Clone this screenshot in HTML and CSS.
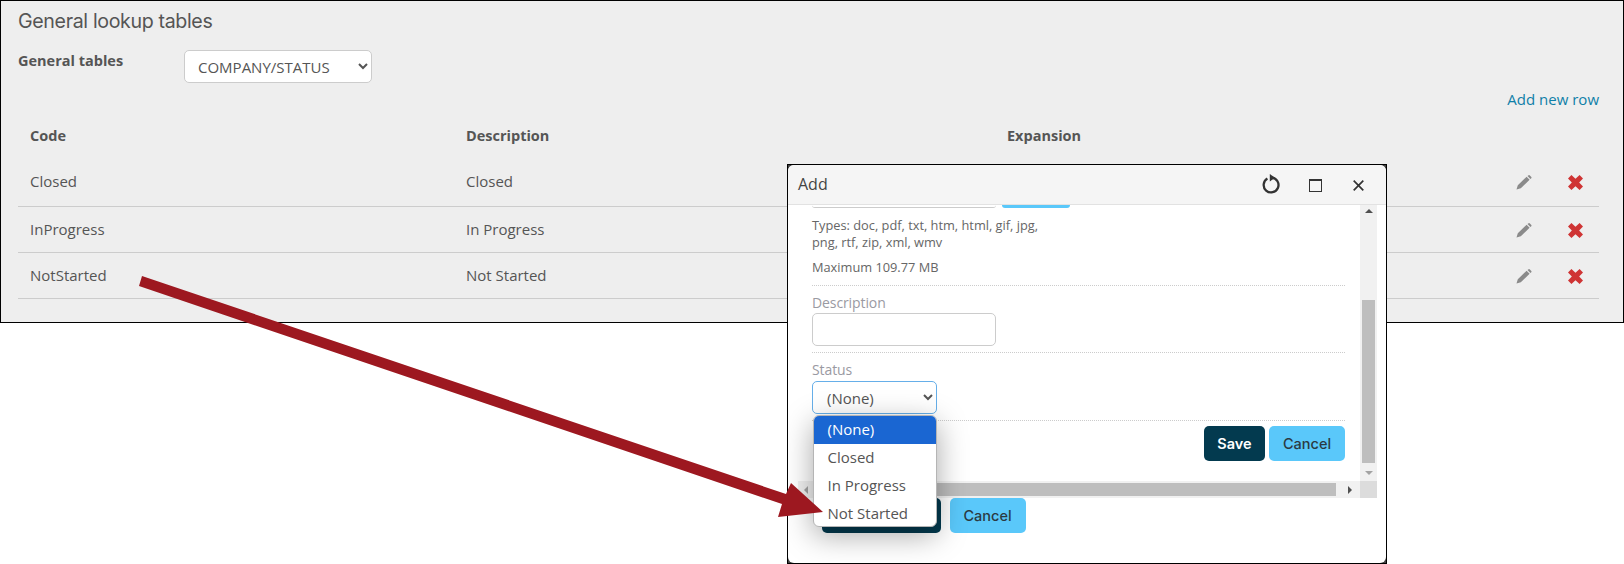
FILE: index.html
```html
<!DOCTYPE html>
<html lang="en">
<head>
<meta charset="utf-8">
<title>General lookup tables</title>
<link rel="stylesheet" href="styles.css">
</head>
<body>
<div class="canvas">
  <section class="panel">
    <h1 class="title">General lookup tables</h1>
    <div class="filter">
      <label class="filter-label">General tables</label>
      <select class="filter-select"><option>COMPANY/STATUS</option></select>
    </div>
    <div class="add-row"><a class="add-link">Add new row</a></div>
    <div class="grid-head">
      <div class="col-code">Code</div>
      <div class="col-desc">Description</div>
      <div class="col-exp">Expansion</div>
    </div>
    <div class="grid-row">
      <div class="col-code">Closed</div>
      <div class="col-desc">Closed</div>
      <div class="col-exp"></div>
      <svg class="icon-edit" viewBox="0 0 16 15"><path d="M0.5 14.5 L1.8 10.2 L10.6 1.8 L13.6 4.8 L4.8 13.3 Z M11.5 1 L12.6 0.2 Q13.3 -0.1 13.9 0.5 L15.3 1.9 Q15.8 2.6 15.3 3.2 L14.4 4.1 Z"/></svg>
      <svg class="icon-del" viewBox="0 0 14 14"><path d="M0 3.2 L3.2 0 L7 3.6 L10.8 0 L14 3.2 L10.4 7 L14 10.8 L10.8 14 L7 10.4 L3.2 14 L0 10.8 L3.6 7 Z"/></svg>
    </div>
    <div class="grid-row">
      <div class="col-code">InProgress</div>
      <div class="col-desc">In Progress</div>
      <div class="col-exp"></div>
      <svg class="icon-edit" viewBox="0 0 16 15"><path d="M0.5 14.5 L1.8 10.2 L10.6 1.8 L13.6 4.8 L4.8 13.3 Z M11.5 1 L12.6 0.2 Q13.3 -0.1 13.9 0.5 L15.3 1.9 Q15.8 2.6 15.3 3.2 L14.4 4.1 Z"/></svg>
      <svg class="icon-del" viewBox="0 0 14 14"><path d="M0 3.2 L3.2 0 L7 3.6 L10.8 0 L14 3.2 L10.4 7 L14 10.8 L10.8 14 L7 10.4 L3.2 14 L0 10.8 L3.6 7 Z"/></svg>
    </div>
    <div class="grid-row">
      <div class="col-code">NotStarted</div>
      <div class="col-desc">Not Started</div>
      <div class="col-exp"></div>
      <svg class="icon-edit" viewBox="0 0 16 15"><path d="M0.5 14.5 L1.8 10.2 L10.6 1.8 L13.6 4.8 L4.8 13.3 Z M11.5 1 L12.6 0.2 Q13.3 -0.1 13.9 0.5 L15.3 1.9 Q15.8 2.6 15.3 3.2 L14.4 4.1 Z"/></svg>
      <svg class="icon-del" viewBox="0 0 14 14"><path d="M0 3.2 L3.2 0 L7 3.6 L10.8 0 L14 3.2 L10.4 7 L14 10.8 L10.8 14 L7 10.4 L3.2 14 L0 10.8 L3.6 7 Z"/></svg>
    </div>
  </section>

  <section class="modal">
    <div class="modal-inner">
      <header class="modal-bar">
        <span class="modal-title">Add</span>
        <svg class="tool tool-reload" viewBox="0 0 18 20"><path d="M5.4 4.6 A7.4 7.4 0 1 0 9.8 3.65" fill="none" stroke="#333" stroke-width="2.3"/><path d="M7.8 0 L13.3 3.8 L7.8 7.5 Z" fill="#333"/></svg>
        <svg class="tool tool-max" viewBox="0 0 13 13"><rect x="0.5" y="0.5" width="12" height="12" fill="none" stroke="#333" stroke-width="1"/><rect x="0" y="0" width="13" height="2" fill="#333"/></svg>
        <svg class="tool tool-close" viewBox="0 0 11 11"><path d="M0.7 0.7 L10.3 10.3 M10.3 0.7 L0.7 10.3" stroke="#333" stroke-width="1.7" fill="none"/></svg>
      </header>
      <div class="modal-view">
        <div class="scroll-area">
          <div class="scroll-content">
            <div class="clipped">
              <div class="clipped-input"></div>
              <div class="clipped-btn"></div>
            </div>
            <div class="file-notes">
              <p class="types">Types: doc, pdf, txt, htm, html, gif, jpg,<br>png, rtf, zip, xml, wmv</p>
              <p class="maximum">Maximum 109.77 MB</p>
            </div>
            <div class="field field-desc">
              <label class="field-label">Description</label>
              <div class="text-input"></div>
            </div>
            <div class="field field-status">
              <label class="field-label">Status</label>
              <select class="status-select"><option>(None)</option></select>
            </div>
            <div class="form-actions">
              <button class="btn btn-dark">Save</button>
              <button class="btn btn-light">Cancel</button>
            </div>
          </div>
          <div class="vbar">
            <span class="arrow-up"></span>
            <div class="vtrack"><div class="vthumb"></div></div>
            <span class="arrow-down"></span>
          </div>
        </div>
        <div class="hbar">
          <span class="arrow-left"></span>
          <div class="hthumb"></div>
          <span class="arrow-right"></span>
          <div class="corner"></div>
        </div>
      </div>
      <div class="modal-actions">
        <button class="btn btn-dark btn-wide"></button>
        <button class="btn btn-light">Cancel</button>
      </div>
      <ul class="dropdown">
        <li class="option option-active">(None)</li>
        <li class="option">Closed</li>
        <li class="option">In Progress</li>
        <li class="option">Not Started</li>
      </ul>
    </div>
  </section>

  <svg class="callout" viewBox="0 0 1624 564" aria-hidden="true">
    <polygon points="142,276 139,286 782,504 778,517 823,512 791,483 786,494"/>
  </svg>
</div>
</body>
</html>
```

FILE: styles.css
```css
* { box-sizing: border-box; }
html, body { margin: 0; padding: 0; background: #fff; }
body { font-family: "Open Sans", "Noto Sans", sans-serif; color: #555; overflow: hidden; }
.canvas { position: relative; width: 1624px; height: 564px; overflow: hidden; }

/* Background panel */
.panel {
  height: 323px;
  background: #eeeeee;
  border: 1px solid #000;
  padding: 0 24px 0 17px;
}
.title {
  margin: 0;
  padding-top: 7px;
  height: 38px;
  font: 400 19.6px/26px "Inter", "Noto Sans", sans-serif;
  letter-spacing: -0.35px;
  color: #555;
}
.filter { display: flex; align-items: flex-start; height: 46px; margin-top: 11px; }
.filter-label { width: 166px; padding-top: 1px; font-weight: 700; font-size: 14.5px; line-height: 20px; color: #555; }
.filter-select {
  width: 188px; height: 33px;
  font: 400 15px "Open Sans", sans-serif;
  color: #555;
  background: #fff;
  border: 1px solid #ccc;
  border-radius: 5px;
  padding-left: 9px;
}
.add-row { display: flex; justify-content: flex-end; height: 20px; margin-top: -7px; }
.add-link { font-size: 15px; line-height: 20px; color: #0f7fa8; }
.grid-head, .grid-row { display: flex; align-items: center; padding-left: 12px; font-size: 15px; color: #555; }
.grid-head { height: 46px; font-weight: 700; font-size: 14.5px; margin-top: 5px; padding-bottom: 3px; }
.grid-head + .grid-row { height: 47px; padding-bottom: 5px; }
.grid-row { height: 46px; border-bottom: 1px solid #ccc; padding-bottom: 2px; line-height: 20px; }
.col-code { width: 436px; }
.col-desc { width: 541px; }
.col-exp { flex: 1; }
.icon-edit { width: 16px; height: 15px; fill: #8a8a8a; margin-right: 36px; margin-top: 4px; }
.icon-del { width: 15px; height: 15px; fill: #cf3434; margin-right: 16px; margin-top: 4px; }

/* Modal window */
.modal {
  position: absolute;
  left: 787px; top: 164px;
  width: 600px; height: 400px;
  background: #444;
  border: 1.5px solid #000;
  font-family: "Open Sans", sans-serif;
}
.modal-inner {
  position: relative;
  height: 100%;
  background: #fff;
  border-radius: 6px;
  overflow: hidden;
}
.modal-bar {
  display: flex; align-items: center;
  height: 40px;
  padding-left: 10px;
  background: #f5f5f5;
  border-bottom: 1px solid #e2e2e2;
}
.modal-title { flex: 1; font-size: 16px; color: #444; padding-bottom: 2px; }
.tool { display: block; flex: none; }
.tool-reload { width: 18px; height: 20px; margin-right: 29px; margin-top: -2px; }
.tool-max { width: 13px; height: 13px; margin-right: 31px; margin-top: 1px; }
.tool-close { width: 11px; height: 11px; margin-right: 22px; margin-top: 1px; }
.modal-view { width: 589px; }
.scroll-area { display: flex; height: 276px; }
.scroll-content { flex: 1; padding: 0 15px 0 24px; overflow: hidden; }
.clipped { display: flex; gap: 6px; height: 3px; overflow: hidden; }
.clipped-input { width: 184px; height: 3px; background: #fff; border-bottom: 1px solid #ccc; border-radius: 0 0 5px 5px; }
.clipped-btn { width: 68px; height: 3px; background: #5ac8fa; border-radius: 0 0 5px 5px; }
.file-notes { height: 78px; border-bottom: 1px dotted #ccc; font-size: 12.8px; color: #666; padding-top: 9px; }
.file-notes p { margin: 0; }
.types { line-height: 17px; }
.maximum { margin-top: 8px !important; line-height: 17px; }
.field-label { display: block; font-size: 14px; line-height: 20px; color: #9a9aa2; letter-spacing: -0.1px; }
.field { border-bottom: 1px dotted #ccc; }
.field-desc { height: 67px; padding-top: 7px; }
.text-input { width: 184px; height: 33px; margin-top: 0; background: #fff; border: 1px solid #ccc; border-radius: 5px; }
.field-status { height: 68px; padding-top: 7px; }
.status-select {
  display: block;
  width: 125px; height: 33px;
  margin-top: 1px;
  font: 400 15px "Open Sans", sans-serif;
  color: #555;
  background: #fff;
  border: 1px solid #66afe9;
  border-radius: 5px;
  padding-left: 10px;
}
.form-actions { display: flex; justify-content: flex-end; gap: 4px; padding-top: 5px; }
.btn {
  height: 35px;
  border: 0;
  border-radius: 5px;
  font: 500 14.5px "Inter", sans-serif;
  padding: 0;
}
.btn-dark { width: 61px; background: #033a4f; color: #fff; font-weight: 600; }
.btn-light { width: 76px; background: #5ac8fa; color: #2b3a42; }
.btn-wide { width: 119px; }

.vbar { width: 17px; background: #f1f1f1; position: relative; display: flex; flex-direction: column; align-items: center; }
.vtrack { flex: 1; width: 13px; position: relative; padding-top: 95px; margin: 0; }
.vthumb { height: 163px; background: #bebebe; }
.arrow-up, .arrow-down, .arrow-left, .arrow-right { display: block; width: 0; height: 0; border-style: solid; border-color: transparent; flex: none; }
.arrow-up { border-width: 0 4px 4px; border-bottom-color: #505050; margin-top: 4px; position: absolute; top: 0; }
.arrow-down { border-width: 4px 4px 0; border-top-color: #a3a3a3; position: absolute; bottom: 6px; }

.hbar { display: flex; align-items: center; height: 17px; margin-left: 10px; background: #f1f1f1; position: relative; }
.arrow-left { border-width: 4px 4px 4px 0; border-right-color: #a3a3a3; margin-left: 6px; margin-right: 5px; }
.hthumb { width: 523px; height: 13px; background: #bebebe; }
.arrow-right { border-width: 4px 0 4px 4px; border-left-color: #505050; margin-left: 12px; margin-right: 6px; }
.corner { width: 17px; height: 17px; background: #dcdcdc; margin-left: auto; }

.modal-actions { display: flex; gap: 9px; padding: 0 0 0 33.5px; }

/* Open dropdown list */
.dropdown {
  position: absolute;
  left: 24.5px; top: 249.5px;
  width: 124px; height: 112px;
  margin: 0; padding: 0;
  list-style: none;
  background: #fff;
  border: 1px solid #b5b5b5;
  border-radius: 6px;
  overflow: hidden;
  box-shadow: 0 8px 30px rgba(0,0,0,.35);
}
.option { height: 28px; padding-left: 14px; font-size: 15px; line-height: 27px; color: #555; }
.option-active { background: #1a66d2; color: #fff; }

/* Red callout arrow */
.callout { position: absolute; left: 0; top: 0; width: 1624px; height: 564px; pointer-events: none; }
.callout polygon { fill: #9d1820; }
```
